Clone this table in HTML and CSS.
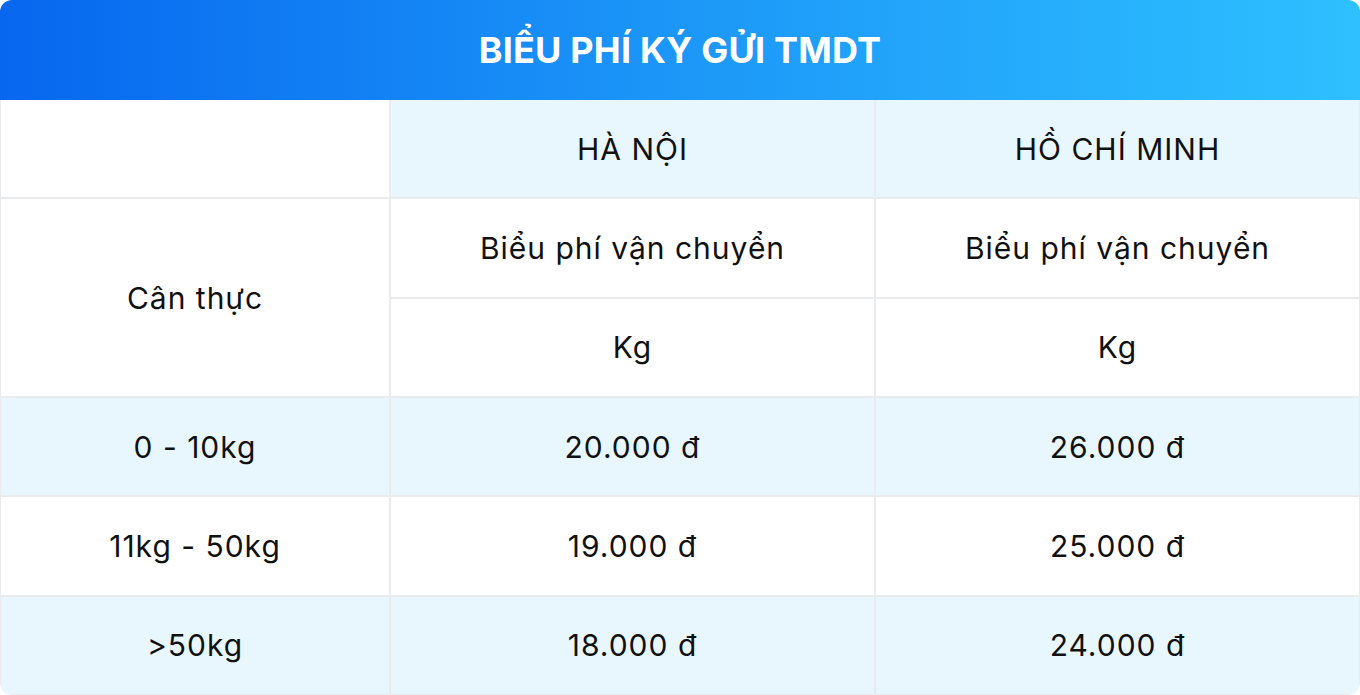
FILE: index.html
```html
<!DOCTYPE html>
<html lang="vi">
<head>
<meta charset="utf-8">
<link rel="stylesheet" href="styles.css">
</head>
<body>
<div class="card">
  <div class="title">BIỂU PHÍ KÝ GỬI TMDT</div>
  <div class="grid">
    <div class="cell"></div>
    <div class="cell blue">HÀ NỘI</div>
    <div class="cell blue">HỒ CHÍ MINH</div>
    <div class="cell span2">Cân thực</div>
    <div class="cell">Biểu phí vận chuyển</div>
    <div class="cell">Biểu phí vận chuyển</div>
    <div class="cell">Kg</div>
    <div class="cell">Kg</div>
    <div class="cell blue">0 - 10kg</div>
    <div class="cell blue">20.000 đ</div>
    <div class="cell blue">26.000 đ</div>
    <div class="cell">11kg - 50kg</div>
    <div class="cell">19.000 đ</div>
    <div class="cell">25.000 đ</div>
    <div class="cell blue">&gt;50kg</div>
    <div class="cell blue">18.000 đ</div>
    <div class="cell blue">24.000 đ</div>
  </div>
</div>
</body>
</html>
```
FILE: styles.css
```css
html, body {
  margin: 0;
  padding: 0;
  background: #ffffff;
}
.card {
  width: 1360px;
  height: 695px;
  border-radius: 12px;
  overflow: hidden;
  font-family: Inter, "Noto Sans", sans-serif;
  display: flex;
  flex-direction: column;
}
.title {
  height: 100px;
  flex: none;
  display: flex;
  align-items: center;
  justify-content: center;
  color: #ffffff;
  font-weight: 700;
  font-size: 36px;
  letter-spacing: 0.2px;
  background: linear-gradient(90deg, #0767ef 0%, #1c97f8 50%, #2ec0ff 100%);
}
.grid {
  flex: 1;
  display: grid;
  grid-template-columns: 388px 483px 1fr;
  grid-template-rows: repeat(6, 1fr);
  gap: 2px;
  background: #e9ebed;
  padding: 0 1px 1px 1px;
  border-radius: 0 0 12px 12px;
}
.cell {
  background: #ffffff;
  display: flex;
  align-items: center;
  justify-content: center;
  font-size: 30px;
  letter-spacing: 1px;
  color: #111111;
}
.cell.blue {
  background: #e8f6fe;
}
.cell.span2 {
  grid-row: span 2;
}
```
